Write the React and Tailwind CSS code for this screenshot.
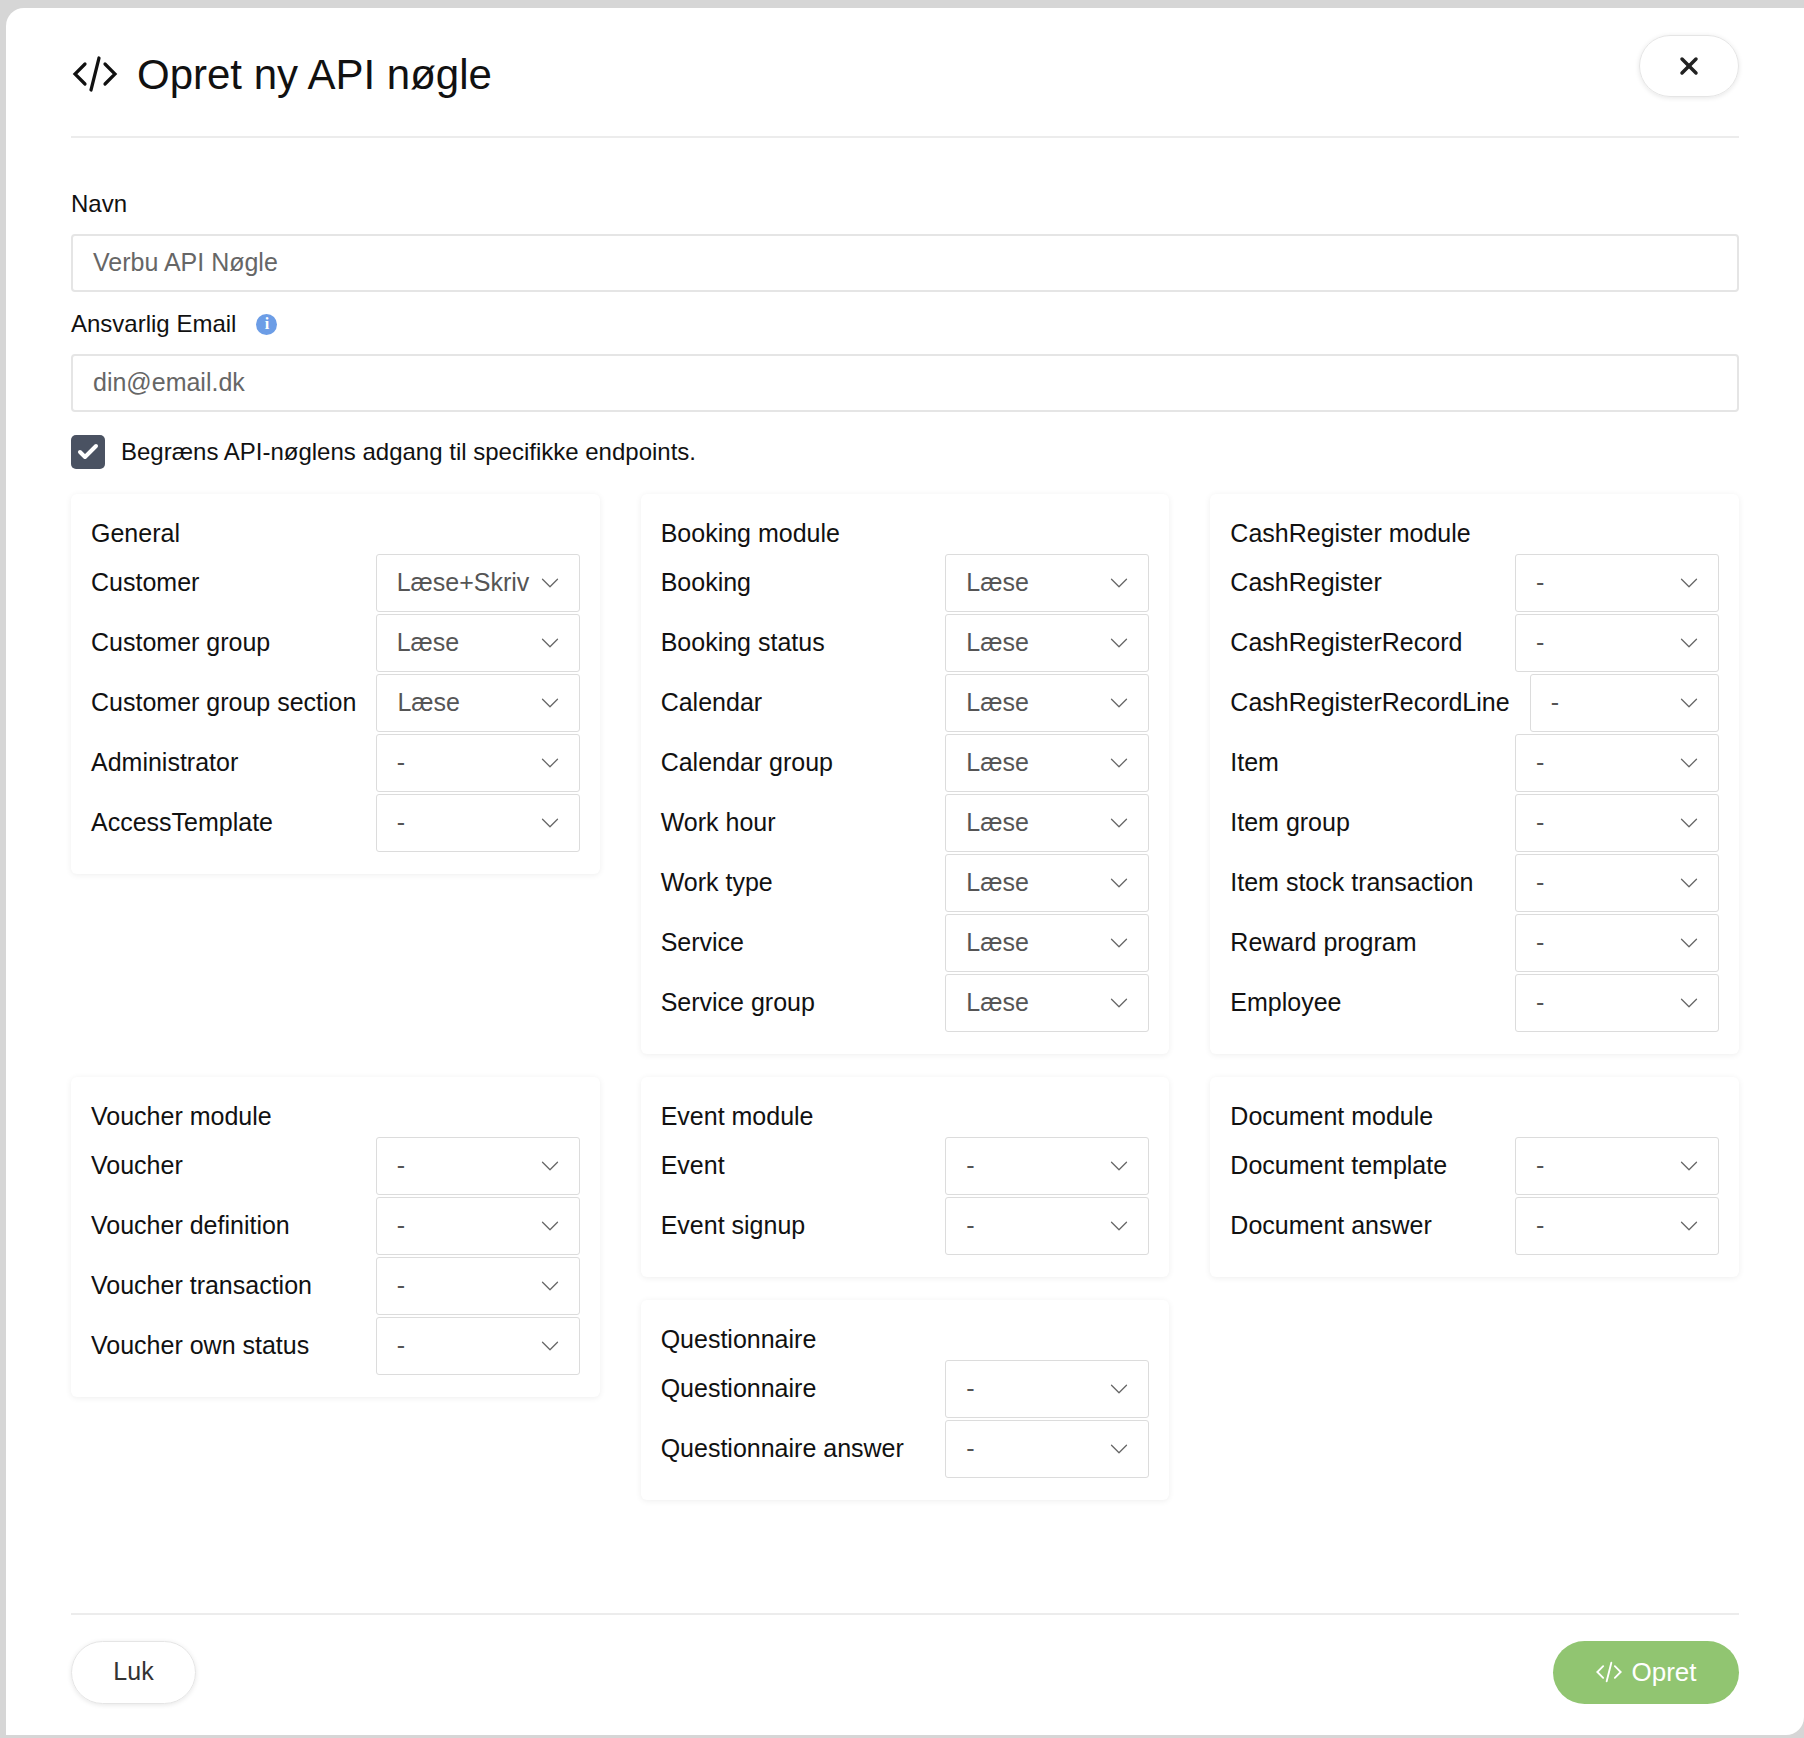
import { X, ChevronDown, Check } from "lucide-react";

const font = { fontFamily: '"Liberation Sans", Arial, sans-serif' };

const Code = ({ className }) => (
  <svg viewBox="0 0 24 24" className={className} fill="none" stroke="currentColor" strokeWidth="1.6" strokeLinecap="round">
    <path d="M7 7l-5 5 5 5" />
    <path d="M17 7l5 5-5 5" />
    <path d="M14 4l-4 16" />
  </svg>
);

const sections = [
  [
    { title: "General", rows: [["Customer", "Læse+Skriv"], ["Customer group", "Læse"], ["Customer group section", "Læse"], ["Administrator", "-"], ["AccessTemplate", "-"]] },
  ],
  [
    { title: "Booking module", rows: [["Booking", "Læse"], ["Booking status", "Læse"], ["Calendar", "Læse"], ["Calendar group", "Læse"], ["Work hour", "Læse"], ["Work type", "Læse"], ["Service", "Læse"], ["Service group", "Læse"]] },
  ],
  [
    { title: "CashRegister module", rows: [["CashRegister", "-"], ["CashRegisterRecord", "-"], ["CashRegisterRecordLine", "-"], ["Item", "-"], ["Item group", "-"], ["Item stock transaction", "-"], ["Reward program", "-"], ["Employee", "-"]] },
  ],
  [
    { title: "Voucher module", rows: [["Voucher", "-"], ["Voucher definition", "-"], ["Voucher transaction", "-"], ["Voucher own status", "-"]] },
  ],
  [
    { title: "Event module", rows: [["Event", "-"], ["Event signup", "-"]] },
    { title: "Questionnaire", rows: [["Questionnaire", "-"], ["Questionnaire answer", "-"]] },
  ],
  [
    { title: "Document module", rows: [["Document template", "-"], ["Document answer", "-"]] },
  ],
];

function Card({ title, rows }) {
  return (
    <div className="bg-white rounded-md shadow-[0_1px_6px_rgba(0,0,0,0.07)] px-[20px] pt-[20px] pb-[22px]">
      <div className="text-[25px] text-[#111] h-[38px] leading-[38px] mb-[2px]">{title}</div>
      <div className="flex flex-col gap-[2px]">
        {rows.map(([label, val]) => (
          <div key={label} className="flex items-center justify-between gap-[20px]">
            <span className="text-[25px] text-[#111] whitespace-nowrap">{label}</span>
            <div className="w-[204px] min-w-0 shrink h-[58px] border border-[#dcdcdc] rounded-[3px] flex items-center pl-[20px] pr-[14px] bg-white">
              <span className="flex-1 overflow-hidden whitespace-nowrap text-[25px] text-[#555]">{val}</span>
              <ChevronDown className="w-[30px] h-[30px] text-[#666] shrink-0" strokeWidth={1} />
            </div>
          </div>
        ))}
      </div>
    </div>
  );
}

export default function App() {
  return (
    <div className="min-h-[1738px] bg-[#d6d6d6] pt-[8px] pl-[6px]" style={font}>
      <div className="bg-white rounded-tl-[18px] rounded-br-[18px] h-[1727px] px-[65px] flex flex-col">
        <div className="flex items-center justify-between h-[130px] border-b-2 border-[#ececec] relative">
          <div className="flex items-center gap-[18px] pt-[4px]">
            <Code className="w-[48px] h-[48px] text-[#111]" />
            <h1 className="text-[42px] text-[#111]">Opret ny API nøgle</h1>
          </div>
          <button className="absolute right-0 top-[27px] w-[100px] h-[62px] rounded-full border border-[#e5e5e5] shadow-[0_1px_5px_rgba(0,0,0,0.1)] flex items-center justify-center">
            <X className="w-[28px] h-[28px] text-[#222]" strokeWidth={3} />
          </button>
        </div>

        <div className="text-[24px] text-[#111] mt-[48px] mb-[12px]">Navn</div>
        <div className="h-[58px] border-2 border-[#e5e5e5] rounded-[4px] flex items-center px-[20px] text-[25px] text-[#666]">Verbu API Nøgle</div>
        <div className="flex items-center gap-[20px] mt-[14px] mb-[12px]">
          <span className="text-[24px] text-[#111]">Ansvarlig Email</span>
          <span className="w-[21px] h-[21px] rounded-full bg-[#6c9de6] text-white text-[16px] font-bold flex items-center justify-center" style={{ fontFamily: "Georgia, serif" }}>i</span>
        </div>
        <div className="h-[58px] border-2 border-[#e5e5e5] rounded-[4px] flex items-center px-[20px] text-[25px] text-[#666]">din@email.dk</div>
        <div className="flex items-center gap-[16px] mt-[22px]">
          <span className="w-[34px] h-[34px] rounded-[5px] bg-[#4a5262] flex items-center justify-center">
            <Check className="w-[24px] h-[24px] text-white" strokeWidth={4} />
          </span>
          <span className="text-[24px] text-[#111]">Begræns API-nøglens adgang til specifikke endpoints.</span>
        </div>

        <div className="grid grid-cols-3 gap-x-[41px] gap-y-[23px] items-start mt-[24px]">
          {sections.map((col, i) => (
            <div key={i} className="flex flex-col gap-[23px]">
              {col.map((s) => <Card key={s.title} {...s} />)}
            </div>
          ))}
        </div>

        <div className="flex-1" />
        <div className="border-t-2 border-[#ececec] h-[122px] flex items-center justify-between pb-[6px]">
          <button className="w-[125px] h-[63px] rounded-full border border-[#e5e5e5] shadow-[0_1px_5px_rgba(0,0,0,0.1)] text-[25px] text-[#333]">Luk</button>
          <button className="w-[186px] h-[63px] rounded-full bg-[#91c571] text-white text-[26px] flex items-center justify-center gap-[8px]">
            <Code className="w-[28px] h-[28px]" />Opret
          </button>
        </div>
      </div>
    </div>
  );
}
